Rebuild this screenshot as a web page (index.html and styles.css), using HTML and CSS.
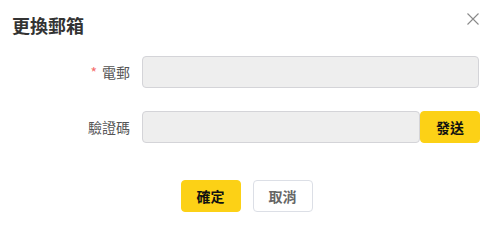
FILE: index.html
```html
<!DOCTYPE html>
<html lang="zh-Hant">
<head>
<meta charset="utf-8">
<link rel="stylesheet" href="styles.css">
</head>
<body>
<div class="dialog">
  <div class="header">
    <div class="title">更換郵箱</div>
    <button class="close" aria-label="close">
      <svg width="12" height="12" viewBox="0 0 12 12"><path d="M0.5 0.5 L11.5 11.5 M11.5 0.5 L0.5 11.5" stroke="#8a8a8a" stroke-width="1.1" fill="none"/></svg>
    </button>
  </div>
  <div class="form">
    <div class="row">
      <label class="label"><span class="req">*</span>電郵</label>
      <div class="field"><input class="input" type="text"></div>
    </div>
    <div class="row row2">
      <label class="label">驗證碼</label>
      <div class="field field-code"><input class="input" type="text"><button class="btn btn-primary send">發送</button></div>
    </div>
  </div>
  <div class="footer">
    <button class="btn btn-primary">確定</button>
    <button class="btn btn-default">取消</button>
  </div>
</div>
</body>
</html>
```
FILE: styles.css
```css
html, body { margin: 0; padding: 0; background: #fff; }
body { font-family: "Noto Sans CJK TC", "Noto Sans", sans-serif; }
.dialog { width: 493px; height: 224px; box-sizing: border-box; padding: 12px 14px 0 12px; }
.header { display: flex; justify-content: space-between; align-items: flex-start; height: 26px; }
.title { font-size: 18px; font-weight: 700; color: #333; line-height: 26px; }
.close { border: 0; background: none; padding: 0; margin: 1px 0 0 0; width: 12px; height: 12px; display: flex; }
.form { margin-top: 18px; }
.row { display: flex; align-items: center; height: 32px; }
.row2 { margin-top: 23px; }
.label { width: 118px; text-align: right; padding-right: 12px; font-size: 14px; color: #555; line-height: 32px; }
.req { color: #f56c6c; margin-right: 5px; }
.field { flex: 1; display: flex; height: 32px; }
.input { flex: 1; min-width: 0; height: 32px; box-sizing: border-box; border: 1px solid #d4d4d8; border-radius: 4px; background: #eeeeee; padding: 0 10px; outline: none; }
.btn { width: 60px; height: 32px; border-radius: 4px; font-family: inherit; font-size: 14px; font-weight: 700; padding: 0; cursor: pointer; }
.btn-primary { background: #fcd116; border: 1px solid #fcd116; color: #111; }
.btn-default { background: #fff; border: 1px solid #dcdfe6; color: #666; }
.send { margin-left: 0; margin-right: -1px; }
.footer { display: flex; justify-content: center; gap: 12px; margin-top: 37px; padding-right: 0; margin-left: 2px; }
```
